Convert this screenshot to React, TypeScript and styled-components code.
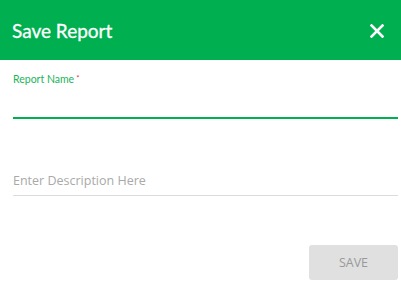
import styled, { createGlobalStyle } from 'styled-components'

const Global = createGlobalStyle`
  html, body {
    margin: 0;
    background: #fff;
    font-family: Lato, "Open Sans", sans-serif;
  }
`

function CloseIcon() {
  return (
    <svg width="14" height="14" viewBox="0 0 14 14">
      <path d="M1.5 1.5 L12.5 12.5 M12.5 1.5 L1.5 12.5" stroke="#fff" strokeWidth="2.6" strokeLinecap="square" />
    </svg>
  )
}

export default function App() {
  return (
    <Dialog>
      <Global />
      <Header>
        <Title>Save Report</Title>
        <CloseButton aria-label="close">
          <CloseIcon />
        </CloseButton>
      </Header>
      <Body>
        <Field>
          <Label>
            Report Name<Star>*</Star>
          </Label>
          <Input active />
        </Field>
        <Field>
          <Input placeholder="Enter Description Here" />
        </Field>
      </Body>
      <Footer>
        <SaveButton disabled>SAVE</SaveButton>
      </Footer>
    </Dialog>
  )
}

const Dialog = styled.div`
  width: 401px;
  height: 285px;
  display: flex;
  flex-direction: column;
`
const Header = styled.div`
  height: 60px;
  background: #00b050;
  display: flex;
  align-items: center;
  justify-content: space-between;
  padding: 0 17px 0 12px;
  box-sizing: border-box;
`
const Title = styled.h2`
  margin: 0;
  color: #fff;
  font-family: Lato, sans-serif;
  font-size: 19px;
  font-weight: 400;
  -webkit-text-stroke: 0.3px #fff;
`
const CloseButton = styled.button`
  border: 0;
  background: none;
  padding: 0;
  display: flex;
  margin-top: 2px;
`
const Body = styled.div`
  padding: 11px 3px 0 13px;
  display: flex;
  flex-direction: column;
  gap: 46px;
`
const Field = styled.div`
  display: flex;
  flex-direction: column;
`
const Label = styled.label`
  font-family: Lato, sans-serif;
  font-size: 10.5px;
  color: #22b45a;
  line-height: 14px;
`
const Star = styled.sup`
  color: #e53935;
  font-size: 8px;
  margin-left: 2px;
  vertical-align: 2px;
`
const Input = styled.input<{ active?: boolean }>`
  border: 0;
  border-bottom: ${(p) => (p.active ? '2px solid #00b050' : '1px solid #dcdcdc')};
  outline: none;
  padding: 0;
  height: ${(p) => (p.active ? '31px' : '30px')};
  font-family: "Open Sans", sans-serif;
  font-size: 12.5px;
  color: #333;
  &::placeholder {
    color: #a9a9a9;
  }
`
const Footer = styled.div`
  margin-top: auto;
  display: flex;
  justify-content: flex-end;
  padding: 0 3px 5px 0;
`
const SaveButton = styled.button`
  width: 89px;
  height: 35px;
  border: 0;
  border-radius: 3px;
  background: #e0e0e0;
  color: #999;
  font-family: "Open Sans", sans-serif;
  font-size: 12.5px;
`
